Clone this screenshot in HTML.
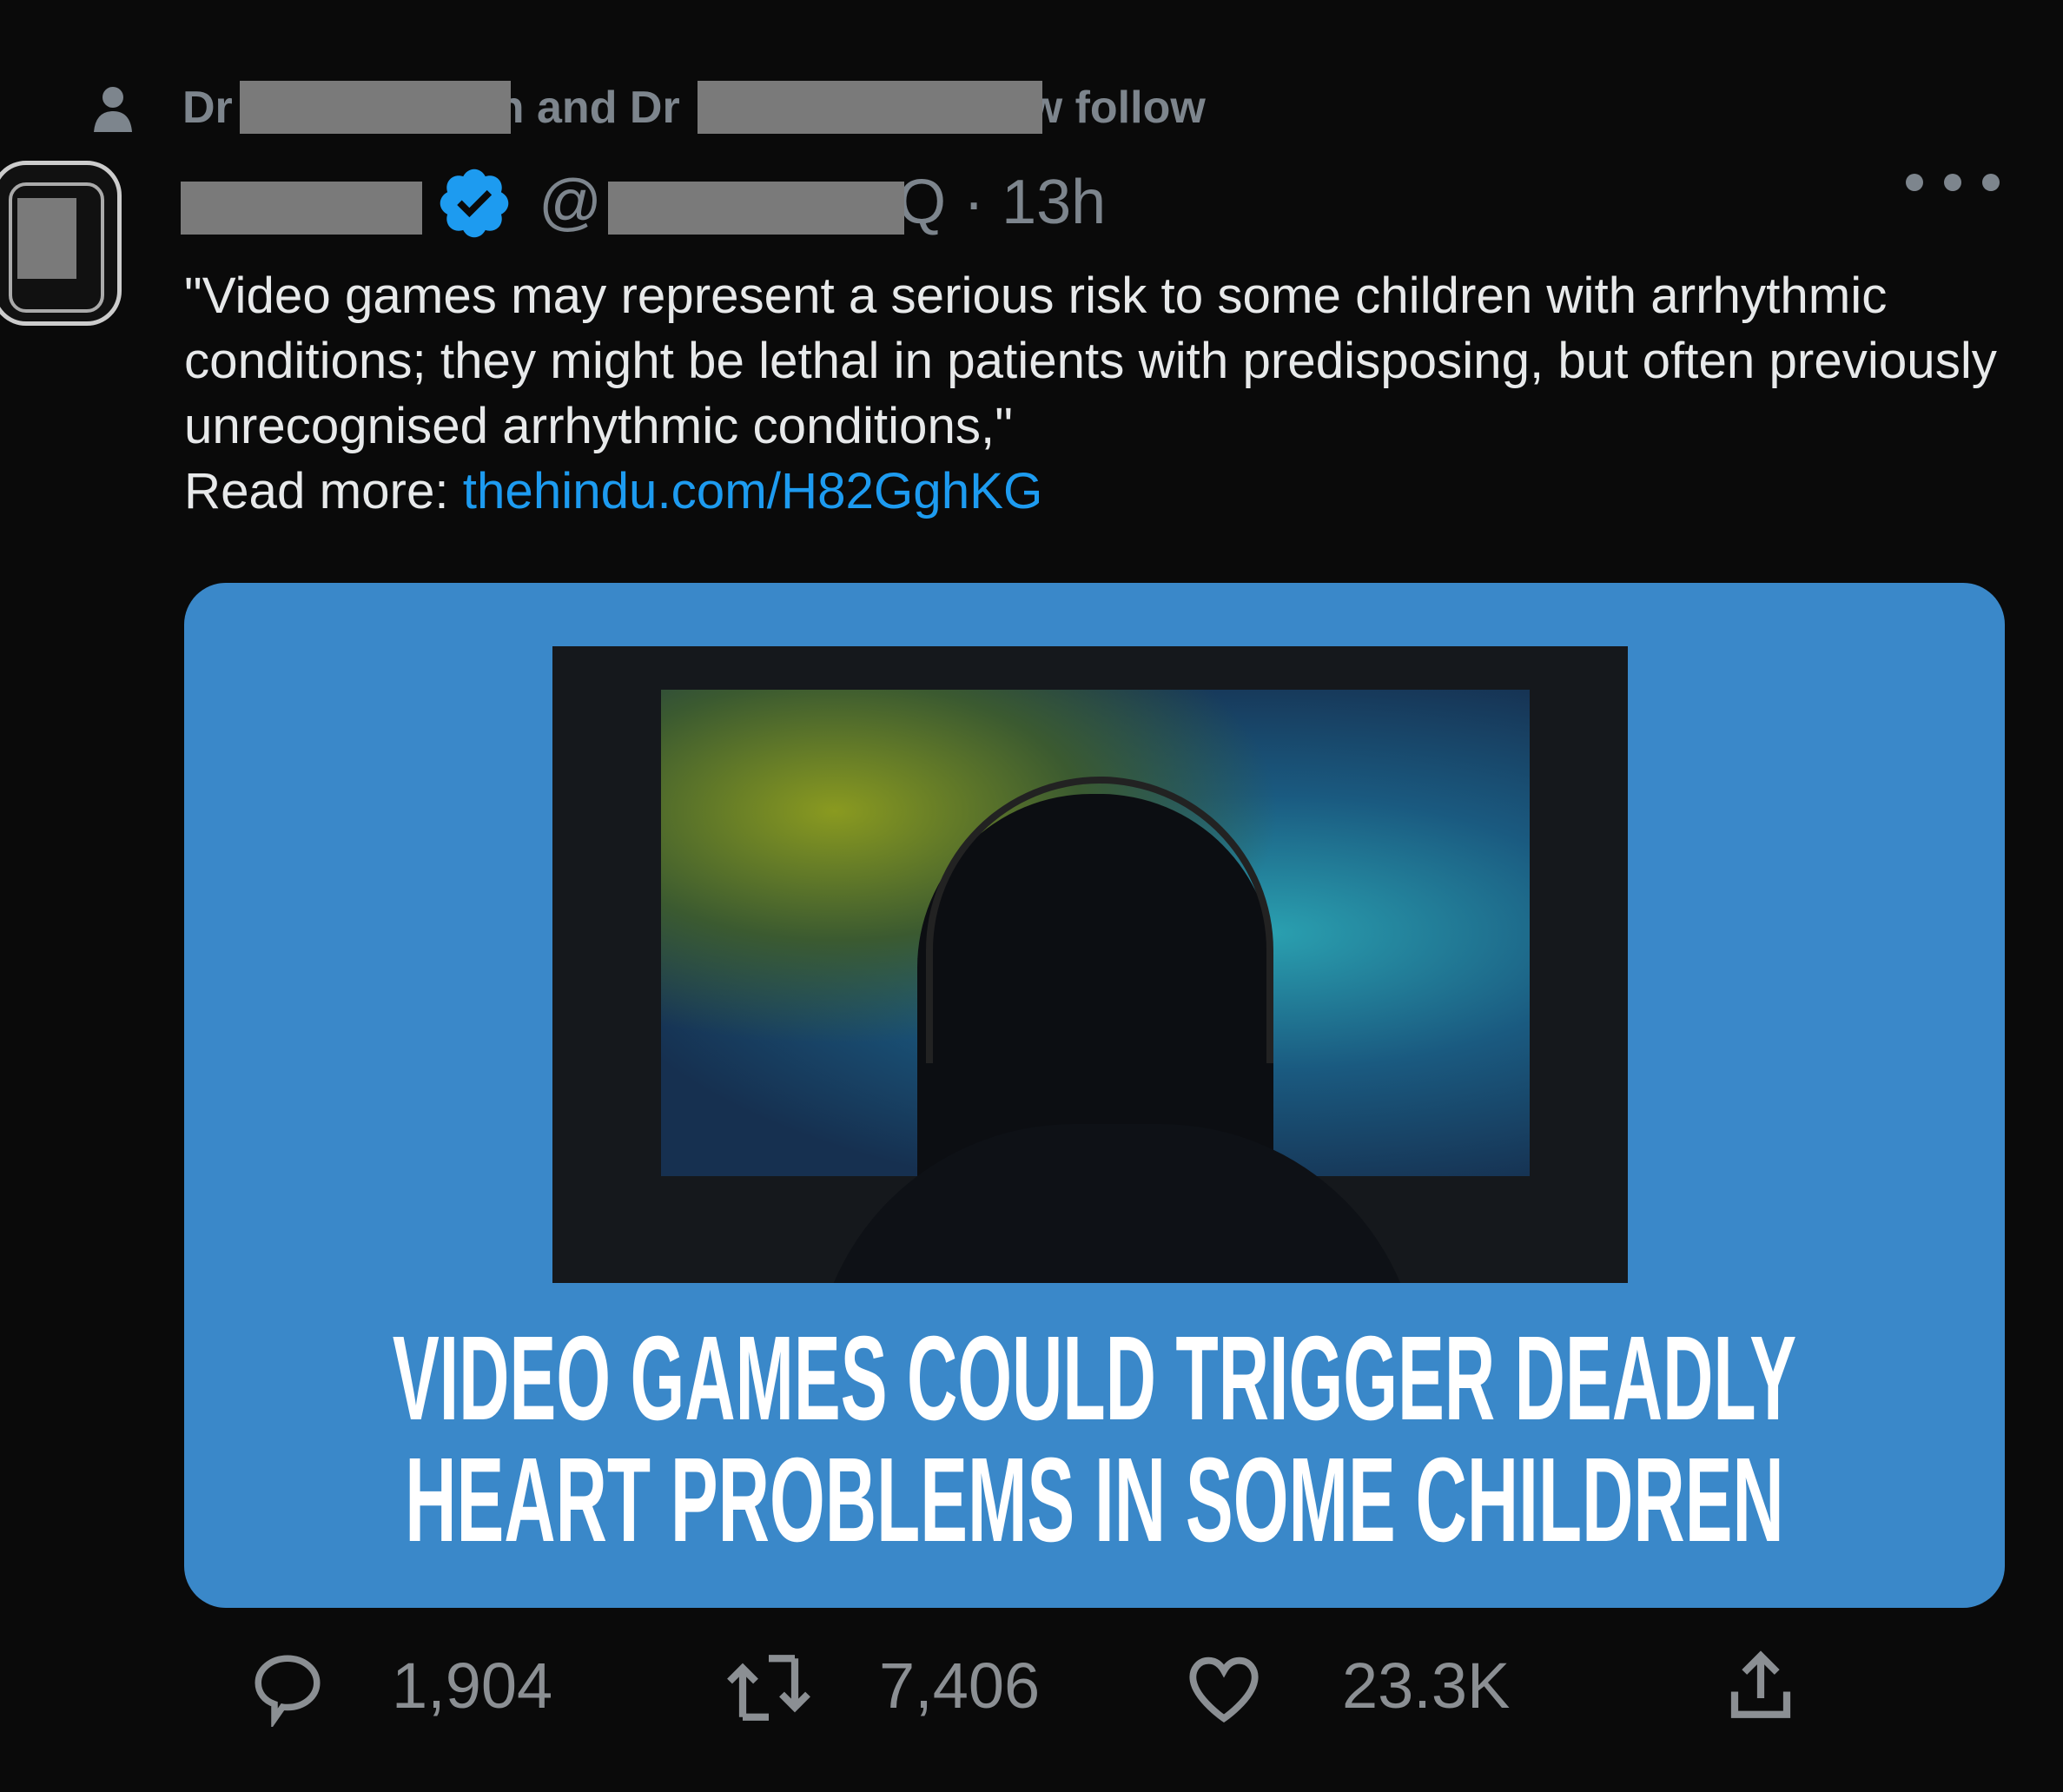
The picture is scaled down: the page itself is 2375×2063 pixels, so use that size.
<!DOCTYPE html>
<html><head><meta charset="utf-8"><style>
html,body{margin:0;padding:0;background:#0a0a0a;width:2375px;height:2063px;overflow:hidden;font-family:"Liberation Sans",Arial,sans-serif}
.a{position:absolute}
.g{position:absolute;background:#7a7a7a}
.t{color:#e7e9ea;font-size:58.3px;white-space:nowrap;left:212px}
.n{color:#8b8f93;font-size:74px;position:absolute;top:1898px;white-space:nowrap}
.h{position:absolute;left:1260px;color:#fff;font-weight:bold;font-size:138px;line-height:138px;white-space:nowrap;transform:translateX(-50%) scaleX(0.585)}
</style></head><body>
<svg class="a" style="left:104px;top:98px" width="52" height="56" viewBox="0 0 52 56"><circle cx="26" cy="14" r="12" fill="#7d858d"/><path d="M4 54 Q6 30 26 30 Q46 30 48 54Z" fill="#7d858d"/></svg>
<div class="a" style="left:210px;top:94px;font-size:52px;font-weight:bold;color:#7d858d;white-space:nowrap">Dr<span style="display:inline-block;width:304px"></span>n and Dr<span style="display:inline-block;width:400px"></span>w follow</div>
<div class="g" style="left:276px;top:93px;width:312px;height:61px"></div>
<div class="g" style="left:803px;top:93px;width:397px;height:61px"></div>
<div class="a" style="left:-10px;top:185px;width:150px;height:190px;border-radius:40px;border:5px solid #ccc;box-sizing:border-box;background:#111"></div>
<div class="a" style="left:10px;top:210px;width:110px;height:150px;border:4px solid #aaa;border-radius:20px;box-sizing:border-box"></div>
<div class="g" style="left:20px;top:228px;width:68px;height:93px"></div>
<div class="g" style="left:208px;top:209px;width:278px;height:61px"></div>
<svg class="a" style="left:500px;top:188px" width="92" height="92" viewBox="0 0 24 24"><path fill="#1d9bf0" d="M22.25 12c0-1.430-.88-2.67-2.19-3.34.46-1.39.2-2.9-.81-3.910s-2.52-1.27-3.91-.81c-.66-1.31-1.91-2.19-3.34-2.19s-2.67.88-3.330 2.19c-1.4-.46-2.91-.2-3.92.81s-1.26 2.52-.8 3.91c-1.31.67-2.2 1.91-2.2 3.34s.89 2.67 2.2 3.34c-.46 1.39-.21 2.9.8 3.91s2.52 1.26 3.91.81c.67 1.31 1.91 2.19 3.34 2.19s2.68-.88 3.34-2.19c1.39.45 2.9.2 3.91-.81s1.27-2.52.81-3.91c1.31-.67 2.19-1.91 2.19-3.34z"/><path fill="#0a0a0a" d="M10.54 16.2l-3.7-3.69 1.42-1.420 2.27 2.27 5.3-5.3 1.42 1.42z"/></svg>
<div class="a" style="left:620px;top:192px;font-size:72px;color:#7d858d;white-space:nowrap">@<span style="display:inline-block;width:340px"></span>Q · 13h</div>
<div class="g" style="left:700px;top:209px;width:341px;height:61px"></div>
<svg class="a" style="left:2190px;top:196px" width="116" height="28"><circle cx="14" cy="14" r="10" fill="#7d858d"/><circle cx="58" cy="14" r="10" fill="#7d858d"/><circle cx="102" cy="14" r="10" fill="#7d858d"/></svg>
<div class="a t" style="top:307px">"Video games may represent a serious risk to some children with arrhythmic</div>
<div class="a t" style="top:382px">conditions; they might be lethal in patients with predisposing, but often previously</div>
<div class="a t" style="top:457px">unrecognised arrhythmic conditions,"</div>
<div class="a t" style="top:532px">Read more: <span style="color:#1d9bf0">thehindu.com/H82GghKG</span></div>
<div class="a" style="left:212px;top:671px;width:2096px;height:1180px;border-radius:48px;background:#3a88c9"></div>
<div class="a" style="left:636px;top:744px;width:1238px;height:733px;background:#15181c;overflow:hidden">
 <div class="a" style="left:125px;top:50px;width:1000px;height:560px;background:radial-gradient(ellipse at 20% 25%,#8a9a20 0%,#3b5a30 25%,transparent 45%),radial-gradient(ellipse at 70% 50%,#2aa0b0 0%,#1a5a80 40%,#163050 80%);"></div>
 <div class="a" style="left:420px;top:170px;width:410px;height:520px;border-radius:200px 200px 60px 60px;background:#0c0e12"></div>
 <div class="a" style="left:300px;top:550px;width:700px;height:300px;border-radius:300px 300px 0 0;background:#0e1116"></div>
 <div class="a" style="left:430px;top:150px;width:400px;height:330px;border-radius:200px 200px 0 0;border:8px solid #222;border-bottom:none;box-sizing:border-box"></div>
</div>
<div class="h" style="top:1518px">VIDEO GAMES COULD TRIGGER DEADLY</div>
<div class="h" style="top:1658px;transform:translateX(-50%) scaleX(0.595)">HEART PROBLEMS IN SOME CHILDREN</div>
<svg class="a" style="left:286px;top:1898px" width="90" height="90" viewBox="0 0 24 24"><path fill="none" stroke="#8b8f93" stroke-width="2" d="M12 3c5 0 9 3.3 9 7.5S17 18 12 18c-.6 0-1 0-1.5-.1L8 21.5V17C4.8 15.9 3 13.4 3 10.5 3 6.3 7 3 12 3z"/></svg>
<div class="n" style="left:451px">1,904</div>
<svg class="a" style="left:830px;top:1898px" width="110" height="90" viewBox="0 0 28 24"><path fill="none" stroke="#8b8f93" stroke-width="2.2" d="M6 21V6M2 10l4-4 4 4M6 21h8M22 3v15M18 14l4 4 4-4M22 3h-8"/></svg>
<div class="n" style="left:1012px">7,406</div>
<svg class="a" style="left:1360px;top:1896px" width="98" height="94" viewBox="0 0 24 24"><path fill="none" stroke="#8b8f93" stroke-width="2" d="M12 21s-8-5.5-9-11c-.6-3.4 1.6-6 4.5-6 2 0 3.5 1.2 4.5 3 1-1.8 2.5-3 4.5-3 2.9 0 5.1 2.6 4.5 6-1 5.5-9 11-9 11z"/></svg>
<div class="n" style="left:1545px">23.3K</div>
<svg class="a" style="left:1982px;top:1892px" width="90" height="96" viewBox="0 0 24 24"><path fill="none" stroke="#8b8f93" stroke-width="2.2" d="M12 16V3M7 8l5-5 5 5M4 14v7h16v-7"/></svg>
</body></html>
